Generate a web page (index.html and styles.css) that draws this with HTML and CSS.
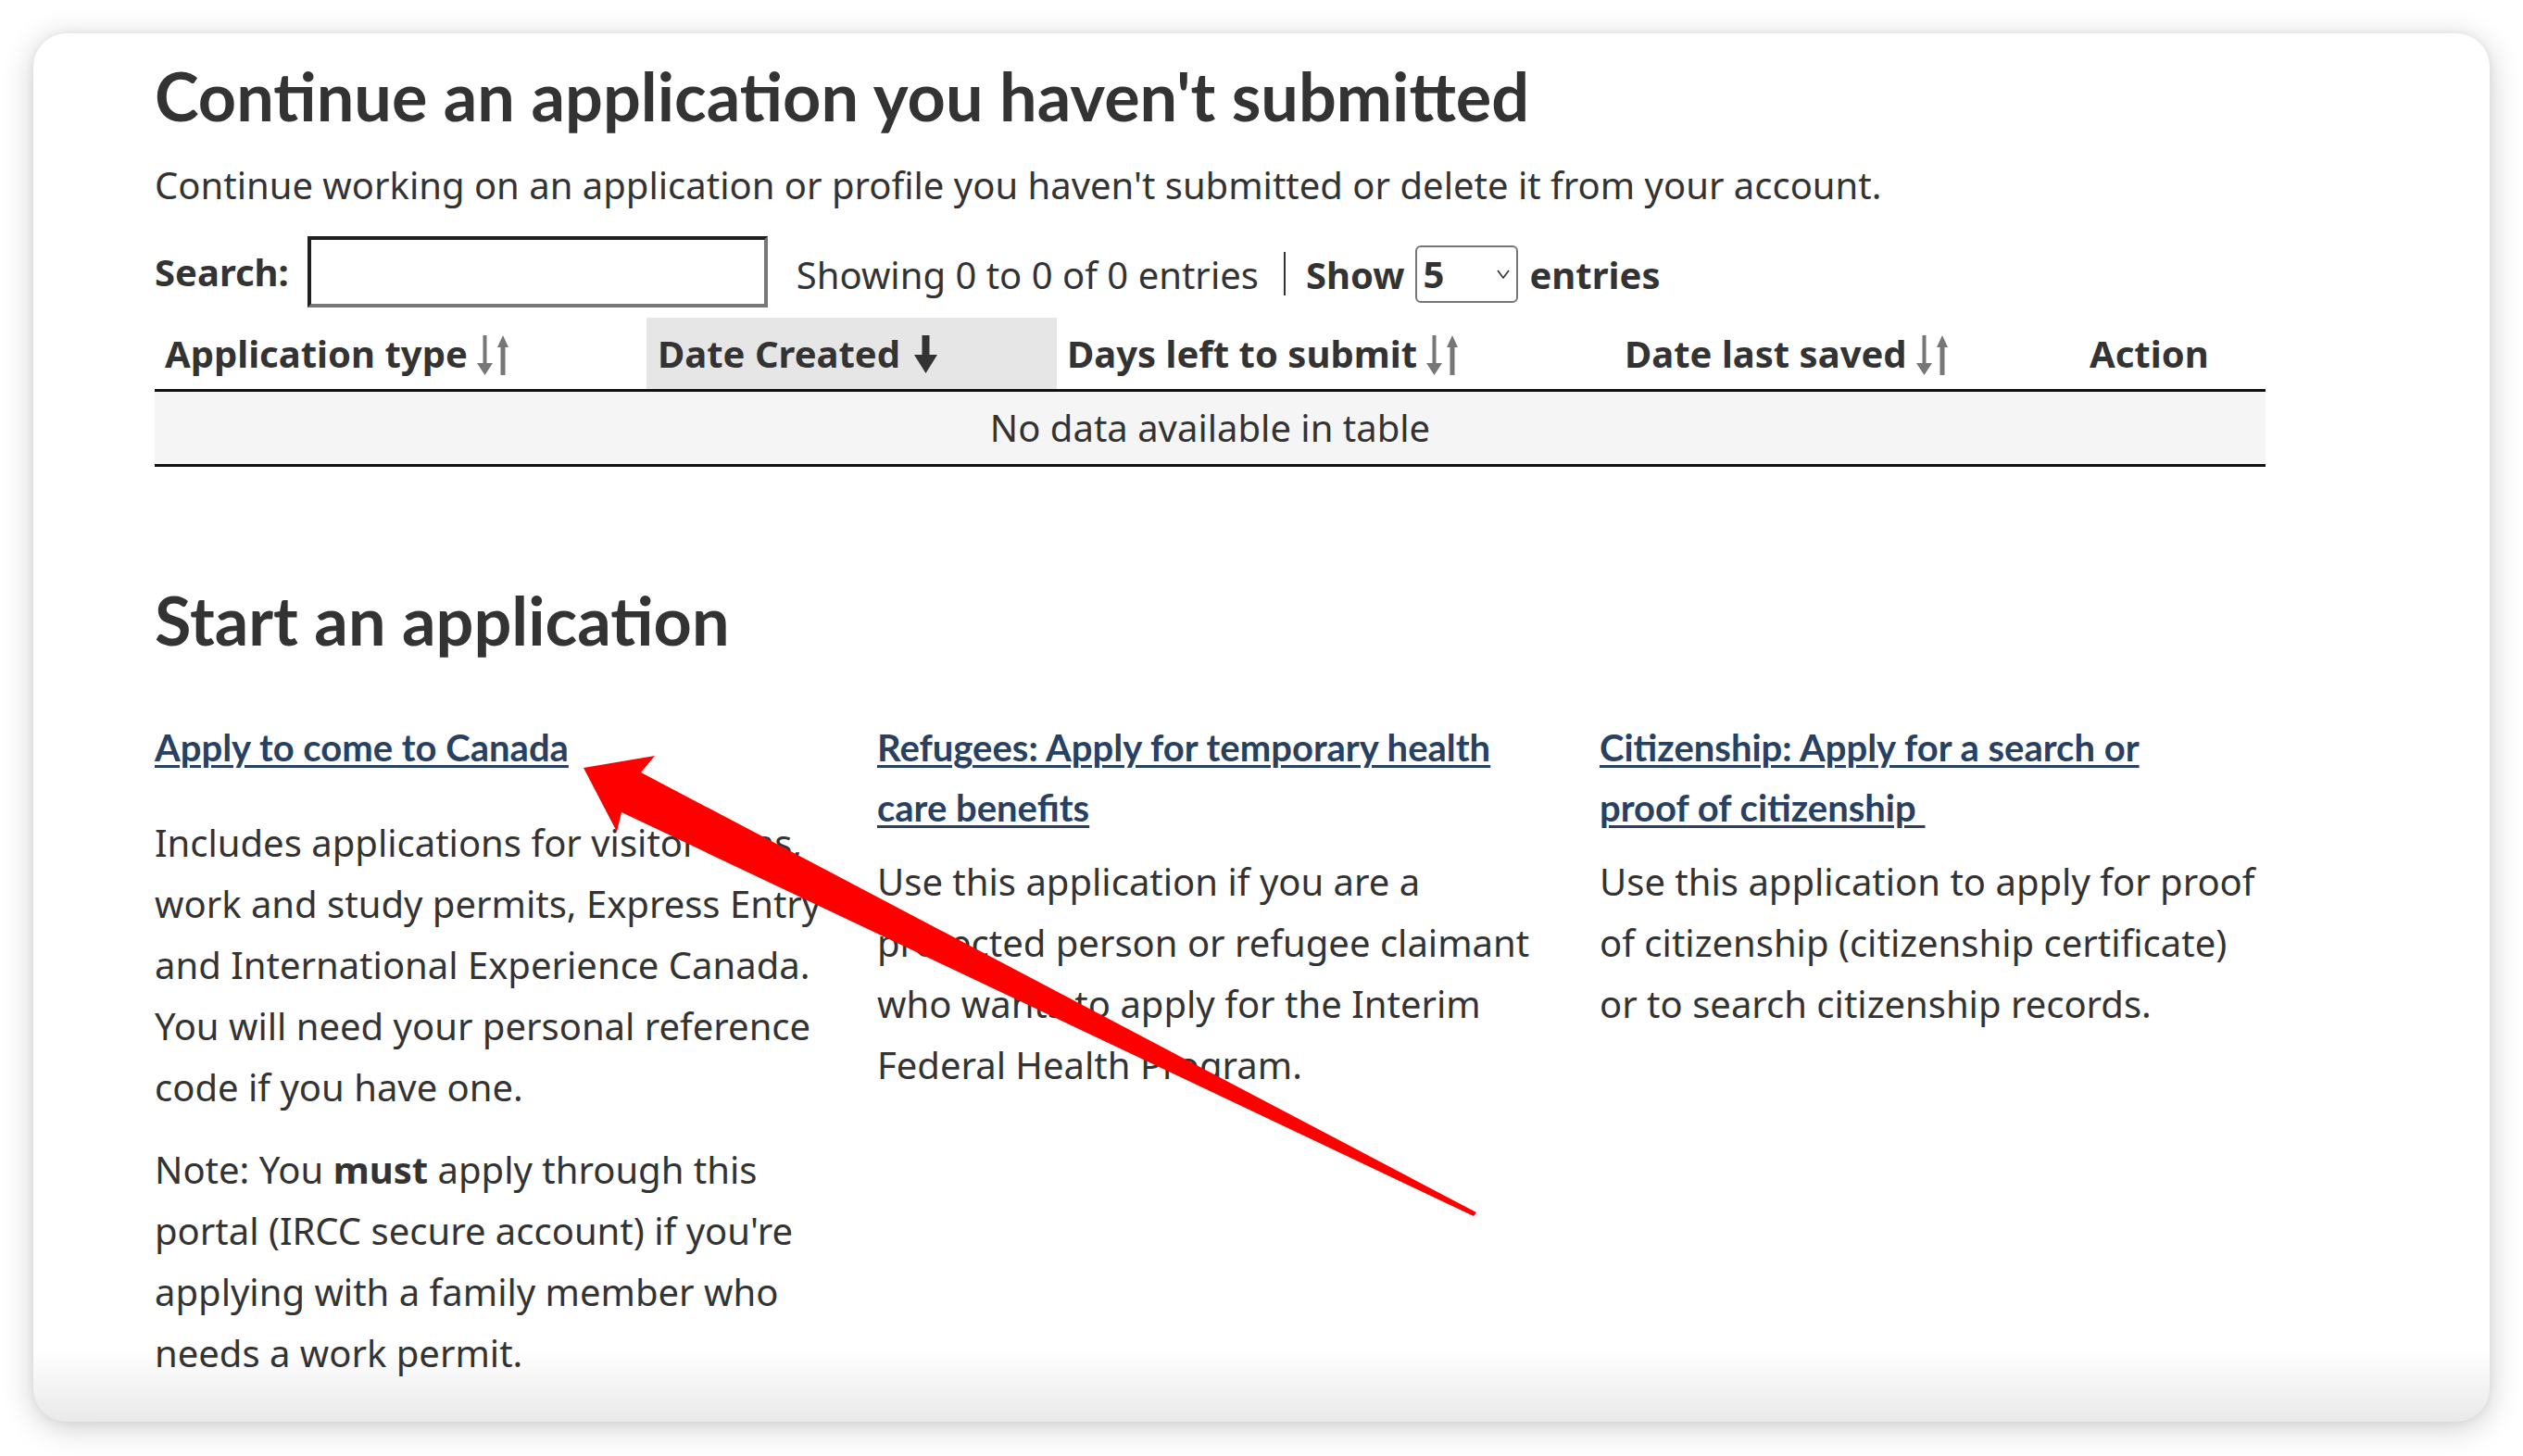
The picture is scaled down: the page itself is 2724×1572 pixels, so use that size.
FILE: index.html
```html
<!DOCTYPE html>
<html lang="en">
<head>
<meta charset="utf-8">
<title>IRCC secure account – Applications</title>
<link rel="stylesheet" href="styles.css">
</head>
<body>
<div class="window">
  <main class="content">
    <h1 class="title">Continue an application you haven't submitted</h1>
    <p class="intro">Continue working on an application or profile you haven't submitted or delete it from your account.</p>

    <div class="dt-top">
      <label class="search-label" for="search">Search:</label>
      <input class="search-input" id="search" type="text">
      <span class="info">Showing 0 to 0 of 0 entries</span>
      <span class="divider"></span>
      <span class="show-label">Show</span>
      <span class="select">
        <span class="select-value">5</span>
        <svg class="chev" viewBox="0 0 14 10" width="14" height="10"><path d="M1 1 L7 9 L13 1" fill="none" stroke="#333" stroke-width="1.6"/></svg>
      </span>
      <span class="show-label">entries</span>
    </div>

    <table class="apps">
      <colgroup>
        <col class="w1"><col class="w2"><col class="w3"><col class="w4"><col class="w5">
      </colgroup>
      <thead>
        <tr>
          <th>Application type<svg class="sort" viewBox="0 0 34 43" width="34" height="43"><rect x="6.5" y="0" width="4" height="32" fill="#777"/><polygon points="0,30 17,30 8.5,43" fill="#777"/><polygon points="22,13 34,13 28,0" fill="#777"/><rect x="25.5" y="11" width="5" height="32" fill="#777"/></svg></th>
          <th class="sorted">Date Created<svg class="sort-desc" viewBox="0 0 25 41" width="25" height="41"><rect x="8.5" y="0" width="8" height="24" fill="#333"/><polygon points="0,21 25,21 12.5,41" fill="#333"/></svg></th>
          <th>Days left to submit<svg class="sort" viewBox="0 0 34 43" width="34" height="43"><rect x="6.5" y="0" width="4" height="32" fill="#777"/><polygon points="0,30 17,30 8.5,43" fill="#777"/><polygon points="22,13 34,13 28,0" fill="#777"/><rect x="25.5" y="11" width="5" height="32" fill="#777"/></svg></th>
          <th>Date last saved<svg class="sort" viewBox="0 0 34 43" width="34" height="43"><rect x="6.5" y="0" width="4" height="32" fill="#777"/><polygon points="0,30 17,30 8.5,43" fill="#777"/><polygon points="22,13 34,13 28,0" fill="#777"/><rect x="25.5" y="11" width="5" height="32" fill="#777"/></svg></th>
          <th class="action">Action</th>
        </tr>
      </thead>
      <tbody>
        <tr><td colspan="5" class="empty">No data available in table</td></tr>
      </tbody>
    </table>

    <h2 class="section">Start an application</h2>

    <div class="cards">
      <div class="card">
        <p class="card-link gap-wide"><a href="#">Apply to come to Canada</a></p>
        <p class="text">Includes applications for visitor visas, work and study permits, Express Entry and International Experience Canada. You will need your personal reference code if you have one.</p>
        <p class="text">Note: You <strong>must</strong> apply through this portal (IRCC secure account) if you're applying with a family member who needs a work permit.</p>
      </div>
      <div class="card">
        <p class="card-link"><a href="#">Refugees: Apply for temporary health care benefits</a></p>
        <p class="text">Use this application if you are a protected person or refugee claimant who wants to apply for the Interim Federal Health Program.</p>
      </div>
      <div class="card">
        <p class="card-link"><a href="#">Citizenship: Apply for a search or<br>proof of citizenship&nbsp;</a></p>
        <p class="text">Use this application to apply for proof of citizenship (citizenship certificate) or to search citizenship records.</p>
      </div>
    </div>
  </main>

  <div class="fade"></div>

  <svg class="annot" viewBox="0 0 2652 1499" width="2652" height="1499" aria-hidden="true">
    <polygon fill="#ff0000" points="594,793 671,780 656,798 1558,1273 1555,1277 635,841 630,862"/>
  </svg>
</div>
</body>
</html>
```

FILE: styles.css
```css
html, body {
  margin: 0;
  padding: 0;
  background: #ffffff;
}

body {
  font-family: "Noto Sans", "Open Sans", "DejaVu Sans", sans-serif;
  font-size: 40px;
  line-height: 66px;
  color: #333333;
}

.window {
  position: relative;
  margin: 36px;
  width: 2652px;
  height: 1499px;
  background: #ffffff;
  border-radius: 36px;
  overflow: hidden;
  box-shadow: 0 6px 34px rgba(0, 0, 0, 0.20), 0 0 10px rgba(0, 0, 0, 0.06);
}

.content {
  padding: 25px 0 0 131px;
  width: 2279px;
}

.title {
  margin: 0 0 22px;
  font-family: Lato, "Liberation Sans", sans-serif;
  font-weight: 700;
  font-size: 72px;
  line-height: 84px;
  color: #333333;
}

.intro {
  margin: 0 0 22px;
}

/* ---------- datatable controls ---------- */
.dt-top {
  display: flex;
  align-items: center;
  height: 77px;
}

.search-label {
  font-weight: 700;
}

.search-input {
  box-sizing: border-box;
  margin: 0 0 0 20px;
  width: 497px;
  height: 77px;
  padding: 0 10px;
  border-style: solid;
  border-width: 4px;
  border-color: #1f1f1f #777777 #777777 #1f1f1f;
  background: #ffffff;
  font: inherit;
}

.info {
  margin-left: 31px;
  margin-top: 6px;
}

.divider {
  width: 2px;
  height: 47px;
  background: #333333;
  margin: 4px 22px 0 27px;
}

.show-label {
  font-weight: 700;
  margin-top: 6px;
}

.select {
  box-sizing: border-box;
  display: flex;
  align-items: center;
  justify-content: space-between;
  width: 111px;
  height: 62px;
  margin: 4px 12px 0;
  padding: 0 7px 0 6px;
  border: 2px solid #767676;
  border-radius: 6px;
  font-weight: 700;
}

.chev {
  display: block;
}

/* ---------- table ---------- */
.apps {
  margin-top: 11px;
  width: 2279px;
  border-collapse: collapse;
  table-layout: fixed;
}

.w1 { width: 531px; }
.w2 { width: 443px; }
.w3 { width: 602px; }
.w4 { width: 500px; }
.w5 { width: 203px; }

.apps th {
  height: 77px;
  padding: 0 11px;
  text-align: left;
  font-weight: 700;
  white-space: nowrap;
  vertical-align: middle;
  border-bottom: 3px solid #111111;
}

.apps th.sorted {
  background: #e6e6e6;
  padding-left: 12px;
}

.apps th.action {
  padding-left: 13px;
}

.sort {
  margin-left: 10px;
  vertical-align: -8px;
}

.sort-desc {
  margin-left: 15px;
  vertical-align: -6px;
}

.apps td.empty {
  height: 78px;
  padding: 0;
  text-align: center;
  background: #f5f5f5;
  border-bottom: 3px solid #111111;
}

/* ---------- start an application ---------- */
.section {
  margin: 125px 0 66px;
  font-family: Lato, "Liberation Sans", sans-serif;
  font-weight: 700;
  font-size: 72px;
  line-height: 80px;
  color: #333333;
}

.cards {
  display: grid;
  grid-template-columns: 720px 720px 720px;
  column-gap: 60px;
  align-items: start;
}

.card p {
  margin: 0;
}

.card-link {
  font-family: Lato, "Liberation Sans", sans-serif;
  font-weight: 700;
  font-size: 40px;
  line-height: 65px;
}

.card-link a {
  color: #284162;
  text-decoration: underline;
  text-decoration-thickness: 3px;
  text-underline-offset: 4px;
}

.card .card-link {
  margin-bottom: 14px;
}

.card .card-link.gap-wide {
  margin-bottom: 37px;
}

.card .text {
  margin-bottom: 23px;
}

.card strong {
  font-weight: 700;
}

/* ---------- overlays ---------- */
.fade {
  position: absolute;
  left: 0;
  right: 0;
  bottom: 0;
  height: 80px;
  background: linear-gradient(to bottom, rgba(0, 0, 0, 0), rgba(0, 0, 0, 0.085));
  pointer-events: none;
}

.annot {
  position: absolute;
  left: 0;
  top: 0;
  pointer-events: none;
}
```
